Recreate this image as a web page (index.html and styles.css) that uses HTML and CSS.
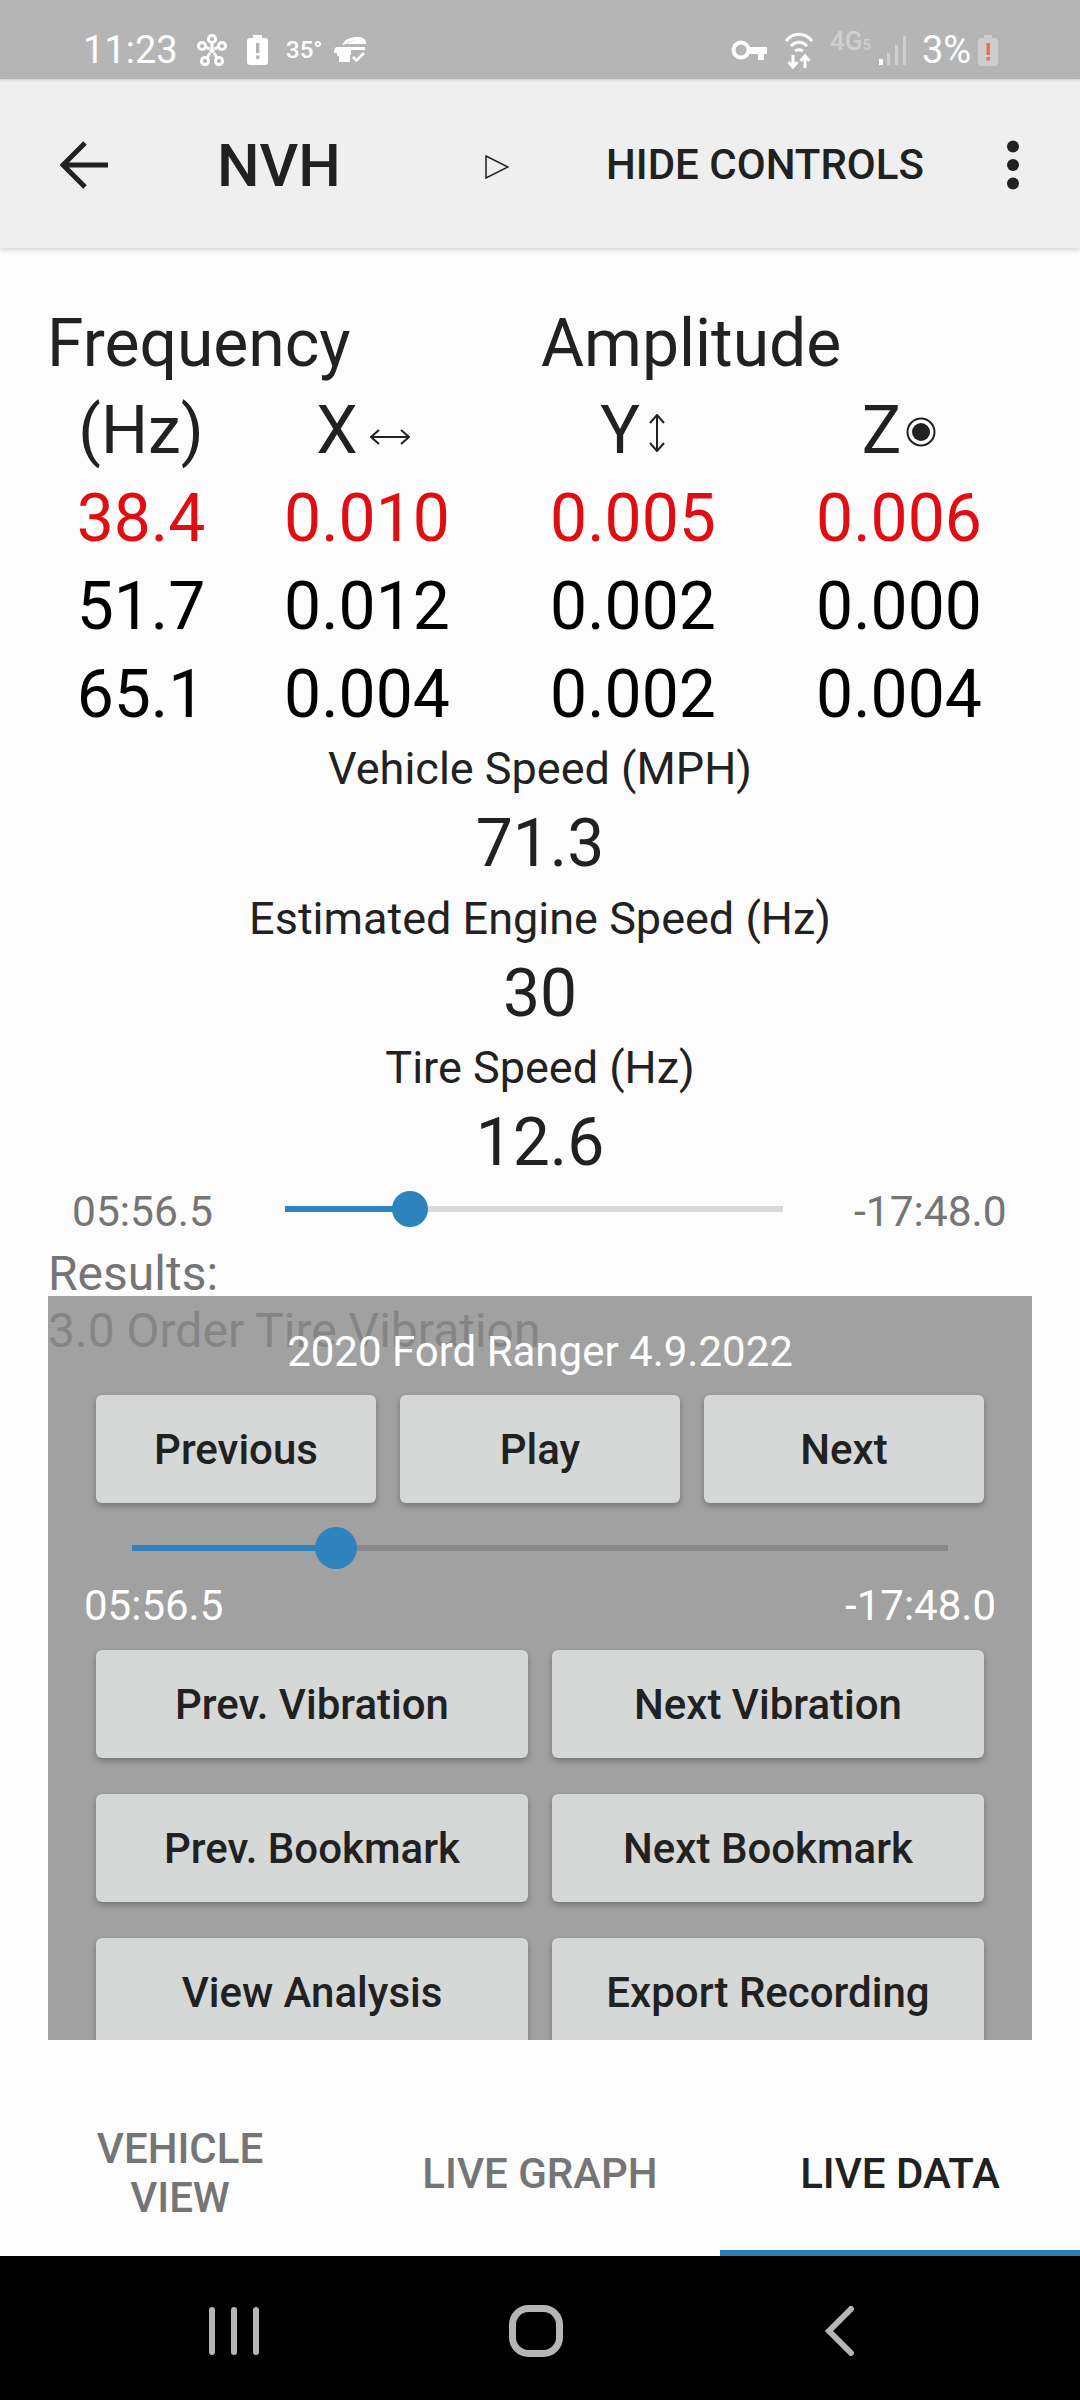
FILE: index.html
```html
<!DOCTYPE html>
<html lang="en">
<head>
<meta charset="utf-8">
<title>NVH</title>
<link rel="stylesheet" href="styles.css">
</head>
<body>
<div class="screen">
  <header class="status">
    <div class="status-left">
      <span class="clock">11:23</span>
      <svg class="ic-fan" viewBox="0 0 30 32" fill="none" stroke="#fff" stroke-width="3"><circle cx="15" cy="5" r="3.6"/><circle cx="5" cy="12" r="3.6"/><circle cx="25" cy="12" r="3.6"/><circle cx="8" cy="27" r="3.6"/><circle cx="22" cy="27" r="3.6"/><path d="M15 9v5M8.5 13l4 2M21.500 13l-4 2M10 24l3-5M20 24l-3-5"/><circle cx="15" cy="16.500" r="2.500" fill="#fff" stroke="none"/></svg>
      <svg class="ic-batt" viewBox="0 0 21 30"><path d="M6 0h9v3h3a3 3 0 0 1 3 3v21a3 3 0 0 1-3 3H3a3 3 0 0 1-3-3V6a3 3 0 0 1 3-3h3z" fill="#fff"/><rect x="9" y="8" width="3.400" height="10" fill="#b5b5b5"/><rect x="9" y="20.500" width="3.400" height="3.400" fill="#b5b5b5"/></svg>
      <span class="temp">35°</span>
      <svg class="ic-car" viewBox="0 0 32 26" fill="none"><path d="M8 8C11 2 17 0 24 0c4 0 8 2 8 5v2H13c2-3 5-3 10-3-5-1-9 0-11 3z" fill="#fff"/><path d="M2 10h29v3H17v5h-1v7H5v-6H3v-3H0v-3z" fill="#fff"/><path d="M19 20l3.500 3.500L30 16" stroke="#fff" stroke-width="2.500"/></svg>
    </div>
    <div class="status-right">
      <svg class="ic-key" viewBox="0 0 36 21" fill="none"><circle cx="10" cy="10" r="7.500" stroke="#fff" stroke-width="4"/><path d="M17 7h19v7h-3v6h-6v-6h-10z" fill="#fff"/></svg>
      <svg class="ic-wifi" viewBox="0 0 28 37" fill="none" stroke="#fff" stroke-width="3"><path d="M1 9c7-9 19-9 26 0M6 14c5-5 11-5 16 0M10 19c3-2 5-2 8 0"/><path d="M8 23v12M3.500 30l4.500 5 4.500-5M20 36V24M15.500 29l4.500-5 4.500 5"/></svg>
      <span class="net">4G<small>5</small></span>
      <svg class="ic-signal" viewBox="0 0 28 29"><rect x="0" y="23" width="4" height="6" fill="#fff"/><rect x="8" y="17" width="3" height="12" fill="#cfcfcf"/><rect x="16" y="9" width="3" height="20" fill="#cfcfcf"/><rect x="24" y="0" width="3" height="29" fill="#cfcfcf"/></svg>
      <span class="pct">3%</span>
      <svg class="ic-low" viewBox="0 0 20 31"><path d="M6 0h8v3h3a3 3 0 0 1 3 3v22a3 3 0 0 1-3 3H3a3 3 0 0 1-3-3V6a3 3 0 0 1 3-3h3z" fill="#cdcdcd"/><rect x="8.500" y="8" width="3.400" height="12" fill="#e8704f"/><rect x="8.500" y="22" width="3.400" height="3.500" fill="#e8704f"/></svg>
    </div>
  </header>

  <nav class="appbar">
    <svg class="ic-back" viewBox="0 0 48 48" fill="none" stroke="#212121" stroke-width="5"><path d="M48 24H4M25 2L3 24l22 22"/></svg>
    <h1 class="title">NVH</h1>
    <svg class="ic-play" viewBox="0 0 24 24" fill="none" stroke="#212121" stroke-width="1.500"><path d="M1 1l22 11L1 23z"/></svg>
    <span class="hide">HIDE CONTROLS</span>
    <svg class="ic-more" viewBox="0 0 14 50" fill="#212121"><circle cx="7" cy="6.500" r="6"/><circle cx="7" cy="25" r="6"/><circle cx="7" cy="43.500" r="6"/></svg>
  </nav>

  <main class="content">
    <div class="head-row">
      <span class="head-freq">Frequency</span>
      <span class="head-amp">Amplitude</span>
    </div>
    <div class="table">
      <span>(Hz)</span>
      <span class="axis axis-x">X<svg class="ax-h" viewBox="0 0 40 20" fill="none" stroke="#212121" stroke-width="2"><path d="M1 10h38M9 3l-8 7 8 7M31 3l8 7-8 7"/></svg></span>
      <span class="axis">Y<svg class="ax-v" viewBox="0 0 18 38" fill="none" stroke="#212121" stroke-width="2"><path d="M9 1v36M2 9l7-8 7 8M2 29l7 8 7-8"/></svg></span>
      <span class="axis">Z<svg class="ax-z" viewBox="0 0 30 30" fill="none"><circle cx="15" cy="15" r="13.500" stroke="#212121" stroke-width="2"/><circle cx="15" cy="15" r="9" fill="#212121"/></svg></span>
      <span class="hot">38.4</span><span class="hot">0.010</span><span class="hot">0.005</span><span class="hot">0.006</span>
      <span>51.7</span><span>0.012</span><span>0.002</span><span>0.000</span>
      <span>65.1</span><span>0.004</span><span>0.002</span><span>0.004</span>
    </div>
    <div class="stat"><p class="stat-label">Vehicle Speed (MPH)</p><p class="stat-value">71.3</p></div>
    <div class="stat"><p class="stat-label">Estimated Engine Speed (Hz)</p><p class="stat-value">30</p></div>
    <div class="stat"><p class="stat-label">Tire Speed (Hz)</p><p class="stat-value">12.6</p></div>
    <div class="seek">
      <span class="seek-time">05:56.5</span>
      <div class="slider slider-top"><div class="slider-fill" style="width:25%"></div><div class="thumb" style="left:25%"></div></div>
      <span class="seek-time seek-end">-17:48.0</span>
    </div>
    <p class="results">Results:<br>3.0 Order Tire Vibration</p>

    <section class="panel">
      <p class="panel-title">2020 Ford Ranger 4.9.2022</p>
      <div class="btn-row three">
        <button class="btn">Previous</button><button class="btn">Play</button><button class="btn">Next</button>
      </div>
      <div class="slider slider-panel"><div class="slider-fill" style="width:25%"></div><div class="thumb" style="left:25%"></div></div>
      <div class="panel-times"><span>05:56.5</span><span>-17:48.0</span></div>
      <div class="btn-row two">
        <button class="btn">Prev. Vibration</button><button class="btn">Next Vibration</button>
        <button class="btn">Prev. Bookmark</button><button class="btn">Next Bookmark</button>
        <button class="btn">View Analysis</button><button class="btn">Export Recording</button>
      </div>
    </section>
  </main>

  <div class="tabs">
    <div class="tab">VEHICLE<br>VIEW</div>
    <div class="tab">LIVE GRAPH</div>
    <div class="tab active">LIVE DATA</div>
  </div>

  <footer class="navbar">
    <svg class="ic-recents" viewBox="0 0 50 48" fill="#b5b5b5"><rect x="0" y="0" width="6" height="48" rx="3"/><rect x="22" y="0" width="6" height="48" rx="3"/><rect x="44" y="0" width="6" height="48" rx="3"/></svg>
    <svg class="ic-home" viewBox="0 0 54 52" fill="none" stroke="#b5b5b5" stroke-width="7"><rect x="3.500" y="3.500" width="47" height="45" rx="16"/></svg>
    <svg class="ic-chev" viewBox="0 0 30 50" fill="none" stroke="#b5b5b5" stroke-width="6" stroke-linecap="round"><path d="M26 3L4 25l22 22"/></svg>
  </footer>
</div>
</body>
</html>
```

FILE: styles.css
```css
* { box-sizing: border-box; margin: 0; padding: 0; }
html, body { width: 1080px; height: 2400px; overflow: hidden; }
body { font-family: Roboto, "Liberation Sans", sans-serif; background: #fcfcfc; color: #212121; }
.screen { display: flex; flex-direction: column; width: 1080px; height: 2400px; }

.status { height: 79px; flex: none; background: #b5b5b5; color: #fff; display: flex; justify-content: space-between; align-items: flex-start; padding: 0 82px 0 83px; position: relative; z-index: 2; box-shadow: 0 1px 3px rgba(0,0,0,.15); }
.status-left, .status-right { display: flex; align-items: center; height: 100px; }
.clock { font-size: 38px; line-height: 48px; width: 114px; }
.ic-fan { width: 30px; height: 32px; margin-right: 20px; }
.ic-batt { width: 21px; height: 30px; margin-right: 18px; }
.temp { font-size: 24px; font-weight: 500; width: 48px; }
.ic-car { width: 32px; height: 26px; }
.ic-key { width: 36px; height: 21px; margin-right: 18px; }
.ic-wifi { width: 28px; height: 37px; margin-right: 17px; }
.net { font-size: 26px; font-weight: 500; color: #cfcfcf; width: 49px; margin-top: -18px; }
.net small { font-size: 15px; }
.ic-signal { width: 28px; height: 29px; margin-right: 15px; }
.pct { font-size: 38px; width: 56px; }
.ic-low { width: 20px; height: 31px; }

.appbar { height: 169px; flex: none; background: #efefef; display: flex; align-items: center; box-shadow: 0 2px 5px rgba(0,0,0,.16); position: relative; z-index: 1; }
.ic-back { width: 48px; height: 48px; margin-left: 60px; margin-top: 2px; }
.title { font-size: 60px; font-weight: 500; width: 268px; margin-left: 109px; margin-top: 4px; color: #212121; line-height: 70px; }
.ic-play { width: 24px; height: 24px; margin-top: 6px; }
.hide { font-size: 42px; font-weight: 500; margin-left: 97px; margin-top: 2px; width: 313px; white-space: nowrap; }
.ic-more { width: 14px; height: 50px; margin-left: 87px; margin-top: 3px; }

.content { flex: none; height: 1792px; position: relative; overflow: hidden; background: #fcfcfc; }
.head-row { display: flex; padding: 52px 0 0 47px; font-size: 66px; line-height: 87px; height: 139px; }
.head-freq { width: 494px; }
.table { display: grid; grid-template-columns: 186px 266px 266px 266px; grid-auto-rows: 88px; margin-left: 48px; font-size: 66px; line-height: 88px; text-align: center; color: #000; }
.table > span:nth-child(-n+4) { color: #212121; }
.table .hot { color: #e00d12; }
.axis { display: flex; justify-content: center; align-items: center; }
.axis-x { padding-right: 8px; }
.ax-h { width: 40px; height: 20px; margin: 12px 0 0 12px; }
.ax-v { width: 18px; height: 38px; margin: 4px 0 0 8px; }
.ax-z { width: 30px; height: 30px; margin: 2px 0 0 5px; }

.stat { height: 149.500px; text-align: center; }
.stat-label { font-size: 45px; line-height: 60px; }
.stat-value { font-size: 66px; line-height: 90px; }
.stat:last-of-type { height: 148px; }

.seek { display: flex; align-items: center; height: 48px; padding-left: 72px; }
.seek-time { font-size: 42.500px; color: #757575; width: 213px; line-height: 48px; }
.seek-end { margin-left: 71px; }
.slider { position: relative; background: #d9d9d9; height: 6px; }
.slider-top { width: 498px; margin-top: -6px; }
.slider-fill { height: 100%; background: #2e82bd; }
.thumb { position: absolute; top: 50%; width: 36px; height: 36px; margin: -18px 0 0 -18px; border-radius: 50%; background: #2e82bd; }

.results { font-size: 48px; line-height: 57px; color: #757575; margin: 9px 0 0 48px; }

.panel { position: absolute; left: 48px; top: 1048px; width: 984px; height: 744px; overflow: hidden; background: rgba(137,137,137,.8); padding: 0 48px; }
.panel-title { color: #fff; font-size: 42px; line-height: 50px; text-align: center; margin-top: 31px; height: 68px; }
.btn-row { display: grid; gap: 0 24px; }
.three { grid-template-columns: repeat(3, 280px); }
.two { grid-template-columns: repeat(2, 432px); grid-auto-rows: 108px; row-gap: 36px; }
.btn { height: 108px; border: 0; border-radius: 6px; background: #d6d8d8; color: #212121; font: 500 42px Roboto, sans-serif; box-shadow: 0 3px 6px rgba(0,0,0,.28); }
.slider-panel { width: 816px; margin: 42px 0 0 36px; background: #888; }
.slider-panel .thumb { width: 42px; height: 42px; margin: -21px 0 0 -21px; }
.panel-times { display: flex; justify-content: space-between; color: #fff; font-size: 42px; line-height: 50px; margin: 30px -12px 0 -12px; height: 69px; }

.tabs { flex: none; height: 216px; display: grid; grid-template-columns: repeat(3, 360px); background: #fcfcfc; }
.tab { display: flex; align-items: center; justify-content: center; text-align: center; padding-top: 50px; font-size: 42px; font-weight: 500; line-height: 49px; color: #757575; }
.tab.active { color: #212121; border-bottom: 6px solid #2e7cb5; padding-top: 56px; }

.navbar { flex: 1; background: #000; position: relative; display: flex; align-items: center; padding-top: 6px; }
.ic-recents { width: 50px; height: 48px; margin-left: 209px; }
.ic-home { width: 54px; height: 52px; margin-left: 250px; }
.ic-chev { width: 30px; height: 50px; margin-left: 262px; }
```
